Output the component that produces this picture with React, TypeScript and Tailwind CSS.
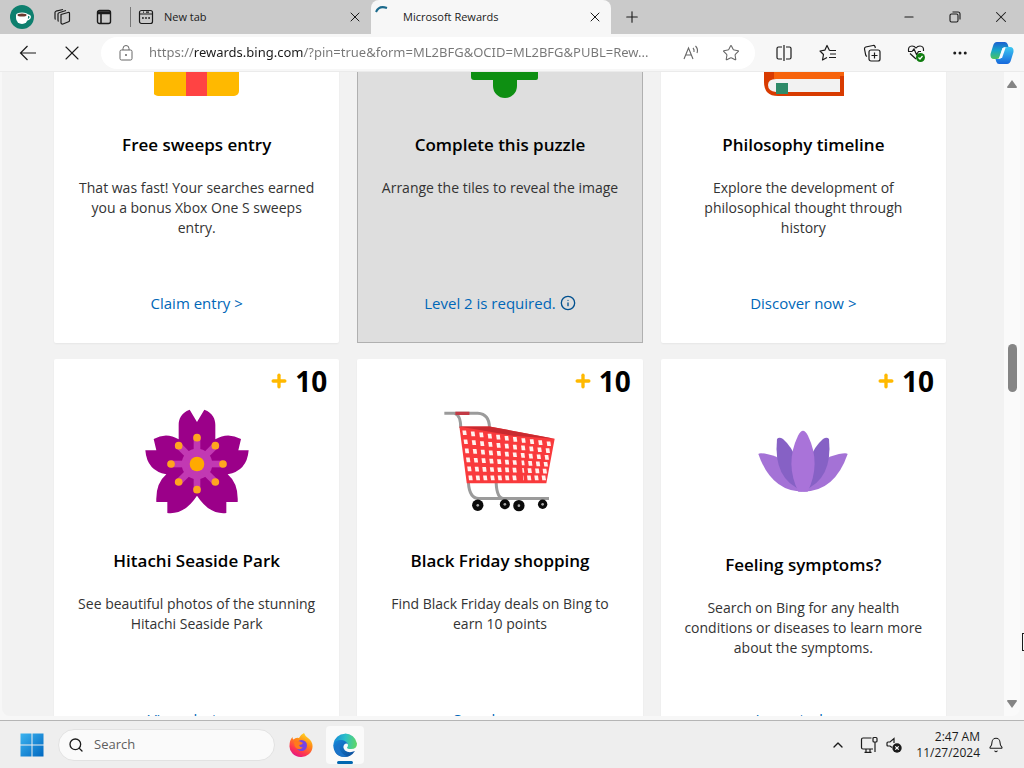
import type { ReactNode } from "react";
import {
  Bell,
  ChevronUp,
  Ellipsis,
  Info,
  Minus,
  Plus,
  Search,
  Star,
  X,
} from "lucide-react";

type CardItem = {
  title: string;
  text: string;
  link: string;
  image: ReactNode;
  points?: number;
  locked?: boolean;
};

function Gift() {
  return (
    <svg viewBox="1 0 86 102" className="h-[102px] w-[86px]">
      <rect x="0" y="22" width="86" height="80" rx="5" fill="#ffb900" />
      <rect x="33" y="22" width="21" height="80" fill="#ff4343" />
      <path d="M43 22C20 22 12 0 28 2c10 1 15 20 15 20s5-19 15-20c16-2 8 20-15 20z" fill="#ff4343" />
    </svg>
  );
}

function Puzzle() {
  return (
    <svg viewBox="0 0 100 106" className="h-[106px] w-[100px]">
      <path
        d="M21 20h22a12 12 0 1 1 24 0h19q2 0 2 2v64q0 2-2 2H67v6a12 12 0 0 1-24 0v-6H24q-3 0-3-3z"
        fill="#0e8f12"
      />
    </svg>
  );
}

function Book() {
  return (
    <svg viewBox="-1 0 80 102" className="h-[102px] w-20 overflow-visible">
      <path d="M0 12Q0 0 12 0h68v102H14Q0 102 0 88z" fill="#d83b01" />
      <path d="M10 0h70v85H10z" fill="#f7630c" />
      <path d="M76 82h4v20h-4z" fill="#d83b01" />
      <path d="M76 85v13H12q-8-1-8-7 0-6 8-6z" fill="#f2f2f2" />
      <path d="M12 89h12v11H12z" fill="#2f8a68" />
    </svg>
  );
}

const stamens = [
  [200, 234],
  [255, 258],
  [278, 313],
  [255, 367],
  [200, 390],
  [145, 367],
  [122, 313],
  [145, 258],
];

function Flower() {
  return (
    <svg viewBox="44 146 312 316" className="h-[106px] w-[104px]">
      <path
        d="M178 150L200 187L222 150C248 160 255 178 255 196V239Q292 216 332 238L324 272H355Q350 334 292 344Q325 372 322 427H288V460Q238 466 200 408Q162 466 111 460V427H78Q75 372 108 344Q50 334 45 272H78L70 238Q108 216 145 239V196C145 178 152 160 178 150Z"
        fill="#9b0089"
      />
      <circle cx="200" cy="313" r="46" fill="#c239b3" />
      {stamens.map(([x, y]) => (
        <g key={`${x}-${y}`}>
          <path d={`M200 313L${x} ${y}`} stroke="#c239b3" strokeWidth="20" />
          <circle cx={x} cy={y} r="11.5" fill="#ffa51f" />
        </g>
      ))}
      <circle cx="200" cy="313" r="22" fill="#ffaa00" />
    </svg>
  );
}

const cartHoles = Array.from({ length: 66 }, (_, i) => {
  const c = (i % 11) / 10;
  const r = Math.floor(i / 11) / 5;
  const left = 105 + 18 * r;
  const right = 357 - 15 * r;
  const top = 219 + 33 * c;
  return { x: left + (right - left) * c, y: top + (354 - top) * r };
});

function Cart() {
  return (
    <svg viewBox="44 154 332 302" className="h-[101px] w-[111px]">
      <g fill="none" stroke="#9b9b9b" strokeWidth="9">
        <path d="M45 161H145Q180 163 180 205" />
        <path d="M75 161Q94 165 94 205" />
        <path d="M117 368Q120 415 148 416H358" />
        <path d="M200 368Q202 415 222 416" />
      </g>
      <path d="M78 161h42" stroke="#c23a45" strokeWidth="10" />
      <path d="M90 200H180L375 237L350 370H112Z" fill="#f93a3c" />
      <path d="M90 200H180L375 237L250 228Z" fill="#c92a30" />
      {cartHoles.map((h, i) => (
        <path key={i} d={`M${h.x - 6} ${h.y - 7}h11l2 14h-11z`} fill="#fff2ee" />
      ))}
      <path d="M262 285L266 368H282L274 285Z" fill="#f93a3c" />
      {[
        [145, 436, 17],
        [226, 433, 15],
        [268, 437, 17],
        [339, 433, 14],
      ].map(([x, y, r]) => (
        <g key={x}>
          <circle cx={x} cy={y} r={r} fill="#0b0b0b" />
          <circle cx={x} cy={y} r="4" fill="#aaa" />
        </g>
      ))}
    </svg>
  );
}

function Lotus() {
  return (
    <svg viewBox="55 141 270 336" className="h-28 w-[90px]">
      <path d="M56 282Q62 275 110 290Q160 330 190 395Q95 395 56 282Z" fill="#a472d6" />
      <path d="M324 282Q318 275 270 290Q220 330 190 395Q285 395 324 282Z" fill="#a472d6" />
      <path d="M112 237Q118 230 130 237Q180 280 190 392Q100 360 112 237Z" fill="#8661c5" />
      <path d="M268 237Q262 230 250 237Q200 280 190 392Q280 360 268 237Z" fill="#8661c5" />
      <path d="M190 212Q197 212 205 227Q245 310 204 395H176Q135 310 175 227Q183 212 190 212Z" fill="#a973d9" />
    </svg>
  );
}

const cards: CardItem[] = [
  {
    title: "Free sweeps entry",
    text: "That was fast! Your searches earned you a bonus Xbox One S sweeps entry.",
    link: "Claim entry >",
    image: <Gift />,
  },
  {
    title: "Complete this puzzle",
    text: "Arrange the tiles to reveal the image",
    link: "Level 2 is required.",
    image: <Puzzle />,
    locked: true,
  },
  {
    title: "Philosophy timeline",
    text: "Explore the development of philosophical thought through history",
    link: "Discover now >",
    image: <Book />,
  },
  {
    title: "Hitachi Seaside Park",
    text: "See beautiful photos of the stunning Hitachi Seaside Park",
    link: "View photos >",
    image: <Flower />,
    points: 10,
  },
  {
    title: "Black Friday shopping",
    text: "Find Black Friday deals on Bing to earn 10 points",
    link: "Search now >",
    image: <Cart />,
    points: 10,
  },
  {
    title: "Feeling symptoms?",
    text: "Search on Bing for any health conditions or diseases to learn more about the symptoms.",
    link: "Learn today >",
    image: <Lotus />,
    points: 10,
  },
];

function Card({ item }: { item: CardItem }) {
  return (
    <article
      className={`flex h-[400px] flex-col items-center px-5 text-center ${
        item.locked ? "bg-[#dedede] inset-ring inset-ring-[#b0b0b0]" : "rounded-xs bg-white shadow-xs"
      }`}
    >
      <div className="-mr-2 flex h-12 shrink-0 items-start gap-1.5 self-end pt-0.5 text-[28px] leading-10 font-bold text-black">
        {item.points && (
          <>
            <Plus className="mt-2.5 size-5 text-[#ffb900]" strokeWidth={4} />
            {item.points}
          </>
        )}
      </div>
      <div className="flex min-h-[108px] shrink-0 items-center">{item.image}</div>
      <h3 className="mt-8 text-[17px] leading-7 font-semibold text-black">{item.title}</h3>
      <p className="mt-[19px] text-sm leading-5 text-[#333]">{item.text}</p>
      <a
        href="#"
        className="mt-auto mb-7 flex items-center gap-1 text-[15px] leading-6 font-medium text-[#0067b8]"
      >
        {item.link}
        {item.locked && <Info className="size-4 text-[#00508f]" />}
      </a>
    </article>
  );
}

function TabBar() {
  return (
    <header className="flex h-[34px] shrink-0 items-center bg-[#cacaca] text-[11px] text-[#1b1b1b]">
      <button aria-label="Profile" className="flex w-11 justify-center">
        <svg viewBox="0 0 24 24" className="size-6">
          <circle cx="12" cy="12" r="12" fill="#0e7f6e" />
          <path d="M6 10h12v3a6 6 0 0 1-12 0z" fill="#fff" />
          <path d="M17 10q4 0 3 3-1 2-4 2" fill="none" stroke="#fff" strokeWidth="1.5" />
          <ellipse cx="12" cy="10" rx="6" ry="2.5" fill="#fff" />
          <ellipse cx="12" cy="10" rx="4.5" ry="1.5" fill="#6b3a2e" />
        </svg>
      </button>
      <button aria-label="Workspaces" className="flex w-9 justify-center">
        <svg viewBox="0 0 18 18" className="size-[18px]" fill="none" stroke="currentColor" strokeWidth="1.2" strokeLinejoin="round">
          <path d="M8 6.5l7-2q1.500-.3 1.500 1v7q0 1-1 1.300L10 16q-1.500.4-2-1z" />
          <path d="M5.500 13.500Q5 13 5 12V6q0-1 1-1.300L13 2.500" />
          <path d="M2.500 11.500Q2 11 2 10V4.500q0-1 1-1.300L10 1.500" />
        </svg>
      </button>
      <button aria-label="Tab actions" className="flex w-12 justify-center">
        <svg viewBox="0 0 16 16" className="size-4" fill="none" stroke="currentColor" strokeWidth="1.4">
          <rect x="1.500" y="1.500" width="13" height="13" rx="2" />
          <path d="M1.500 3h13M1.500 4.500h13M5 4v10" strokeWidth="1.6" />
        </svg>
      </button>
      <div className="ml-0.5 h-5 w-px bg-[#777]" />
      <div className="flex min-w-0 flex-1 items-center">
        <div className="flex w-60 items-center pr-2 pl-[7px]">
          <svg viewBox="0 0 16 16" className="size-4" fill="none" stroke="currentColor" strokeWidth="1.2">
            <rect x="1.500" y="1.500" width="13" height="13" rx="2" />
            <path d="M2 5h12M5 3.200h1M8 3.200h3" />
            <path d="M4 9h1.800M7.100 9h1.800M10.200 9H12" strokeWidth="1.6" />
          </svg>
          <button className="ml-2.5 flex-1 text-left">New tab</button>
          <button aria-label="Close New tab">
            <X className="size-4" strokeWidth={1.5} />
          </button>
        </div>
        <div className="flex h-[34px] w-60 items-center rounded-t-lg bg-[#f7f7f7] pr-2 pl-1">
          <svg viewBox="0 0 16 16" className="mt-1 size-4 self-start" fill="none">
            <path d="M1 8Q4 1 12 4" stroke="#1b6a8c" strokeWidth="2" />
          </svg>
          <button className="ml-3 flex-1 text-left">Microsoft Rewards</button>
          <button aria-label="Close Microsoft Rewards">
            <X className="size-4" strokeWidth={1.5} />
          </button>
        </div>
        <button aria-label="New tab" className="ml-3">
          <Plus className="size-[18px]" strokeWidth={1.5} />
        </button>
      </div>
      <button aria-label="Minimize" className="flex w-[46px] justify-center">
        <Minus className="size-3.5" strokeWidth={1.8} />
      </button>
      <button aria-label="Restore" className="flex w-[46px] justify-center">
        <svg viewBox="0 0 12 12" className="size-3" fill="none" stroke="currentColor" strokeWidth="1.1">
          <rect x="1" y="3" width="8" height="8" rx="1.500" />
          <path d="M3.500 1H9q2 0 2 2v5.500" />
        </svg>
      </button>
      <button aria-label="Close" className="flex w-[46px] justify-center">
        <X className="size-[18px]" strokeWidth={1.4} />
      </button>
    </header>
  );
}

function ToolBar() {
  return (
    <div className="flex h-[38px] shrink-0 items-center border-b border-[#ebebeb] bg-[#f7f7f7] pr-0.5 pl-1.5 text-[#1b1b1b]">
      <button aria-label="Back" className="flex w-11 justify-center">
        <svg viewBox="0 0 18 18" className="size-[18px]" fill="none" stroke="currentColor" strokeWidth="1.2">
          <path d="M17 9H1.500M8.500 2L1.500 9l7 7" />
        </svg>
      </button>
      <button aria-label="Stop" className="flex w-11 justify-center">
        <X className="size-6" strokeWidth={1.1} />
      </button>
      <div className="mx-[7px] flex h-8 min-w-0 flex-1 items-center rounded-full bg-white pr-3.5 pl-[18px] text-[#666]">
        <svg viewBox="0 0 14 16" className="h-4 w-3.5" fill="none" stroke="currentColor">
          <rect x="1" y="5" width="12" height="10" rx="1.500" />
          <path d="M4 5V3.500a3 3 0 0 1 6 0V5" />
          <circle cx="7" cy="10" r=".6" fill="currentColor" />
        </svg>
        <input
          aria-label="Address"
          readOnly
          value="https://rewards.bing.com/?pin=true&form=ML2BFG&OCID=ML2BFG&PUBL=Rew..."
          className="ml-4 min-w-0 flex-1 bg-[linear-gradient(90deg,#767676_45px,#1b1b1b_45px,#1b1b1b_154px,#767676_154px)] bg-clip-text font-['Noto_Sans','Open_Sans',sans-serif] text-[13px] text-transparent outline-none"
        />
        <button aria-label="Read aloud" className="flex w-[60px] justify-center">
          <svg viewBox="0 0 18 18" className="size-[18px]" fill="none" stroke="currentColor" strokeWidth="1.100">
            <path d="M2 15L6.500 4L11 15M3.500 11h6M11 4q1.500 1.500 1 4M13.500 2q3 3 1.500 7" />
          </svg>
        </button>
        <button aria-label="Add to favorites" className="flex w-5 justify-center">
          <Star className="size-[18px]" strokeWidth={1.4} />
        </button>
      </div>
      <button aria-label="Split screen" className="flex w-11 justify-center">
        <svg viewBox="0 0 18 18" className="size-[18px]" fill="none" stroke="currentColor" strokeWidth="1.2">
          <path d="M7 3H3.500Q2 3 2 4.500v9Q2 15 3.500 15H7M11 3h3.500Q16 3 16 4.500v9q0 1.500-1.500 1.500H11M9 1v16" />
        </svg>
      </button>
      <button aria-label="Favorites" className="flex w-11 justify-center">
        <svg viewBox="0 0 18 18" className="size-[18px]" fill="none" stroke="currentColor" strokeWidth="1.2" strokeLinejoin="round">
          <path d="M10.500 6.500L8 1.500L5.800 6.200L1 7l3.500 3.500L3.500 16l4.500-2.500M10.500 6.500H17M11 10h6M10 13.500h7" />
        </svg>
      </button>
      <button aria-label="Collections" className="flex w-11 justify-center">
        <svg viewBox="0 0 18 18" className="size-[18px]" fill="none" stroke="currentColor" strokeWidth="1.2">
          <rect x="6" y="6" width="11" height="11" rx="2" />
          <path d="M11.500 8.500v6M8.500 11.500h6M4 12.500Q3 12 2.700 11L1.500 5Q1.300 3.500 2.700 3L10 1.500q1.500-.3 2 1l.4 1.500" />
        </svg>
      </button>
      <button aria-label="Browser essentials" className="flex w-11 justify-center">
        <svg viewBox="0 0 18 18" className="size-[18px]" fill="none" stroke="currentColor" strokeWidth="1.2">
          <path d="M9 15L3 9.500M1.500 7Q1 2 5 2q2.500 0 4 2 1.500-2 4-2 4 0 3.500 5M1 7.500h4L7 5l2.500 5.500L11.500 7.500H14" />
          <circle cx="13.500" cy="13.500" r="4.500" fill="#107c10" stroke="none" />
          <path d="M11.500 13.500l1.500 1.500 2.500-3" stroke="#fff" />
        </svg>
      </button>
      <button aria-label="Settings and more" className="flex w-11 justify-center">
        <Ellipsis className="size-[18px]" />
      </button>
      <button aria-label="Copilot" className="flex w-10 justify-center">
        <svg viewBox="0 0 24 24" className="size-6">
          <defs>
            <linearGradient id="cpa" x1="0" y1="0" x2="0" y2="1">
              <stop offset="0" stopColor="#1b5fd0" />
              <stop offset=".5" stopColor="#17a7c9" />
              <stop offset="1" stopColor="#4cc35e" />
            </linearGradient>
            <linearGradient id="cpb" x1="0" y1="0" x2="0" y2="1">
              <stop offset="0" stopColor="#3cc9f2" />
              <stop offset="1" stopColor="#1668dc" />
            </linearGradient>
          </defs>
          <path d="M7 1h8q2 0 2.800 2.500L18.500 6H15q-2 0-2.700 2l-2.500 8Q9 18 7 18H4q-4 0-3.500-5L3 5Q4 1 7 1z" fill="url(#cpa)" />
          <path d="M17 23H9q-2 0-2.800-2.500L5.500 18H9q2 0 2.700-2l2.500-8Q15 6 17 6h3q4 0 3.500 5L21 19q-1 4-4 4z" fill="url(#cpb)" />
          <path d="M12.500 7h3l-3.500 10H9z" fill="#f4fbff" />
        </svg>
      </button>
    </div>
  );
}

function TaskBar() {
  return (
    <footer className="flex h-12 shrink-0 items-center border-t border-[#b5b5b5] bg-[#eeeeee] px-5 text-[#1b1b1b]">
      <button aria-label="Start">
        <svg viewBox="0 0 24 24" className="size-6">
          <defs>
            <linearGradient id="win" x1="0" y1="0" x2="1" y2="1">
              <stop offset="0" stopColor="#3cb4f0" />
              <stop offset="1" stopColor="#0067c0" />
            </linearGradient>
          </defs>
          <path d="M.5.500h11v11H.5zM12.500.500h11v11h-11zM.5 12.500h11v11H.5zM12.500 12.500h11v11h-11z" fill="url(#win)" />
        </svg>
      </button>
      <label className="ml-3.5 flex h-8 w-[217px] items-center gap-2.5 rounded-full border border-[#e2e2e2] bg-[#fafafa] pl-[9px]">
        <Search className="size-4" />
        <input
          type="search"
          placeholder="Search"
          className="min-w-0 flex-1 text-[13px] outline-none placeholder:text-[#5e5e5e]"
        />
      </label>
      <button aria-label="Firefox" className="ml-3.5">
        <svg viewBox="0 0 24 24" className="size-6">
          <defs>
            <linearGradient id="ffx" x1=".8" y1="0" x2=".3" y2="1">
              <stop offset="0" stopColor="#ffe226" />
              <stop offset=".4" stopColor="#ff8a16" />
              <stop offset=".75" stopColor="#ff3750" />
              <stop offset="1" stopColor="#e31587" />
            </linearGradient>
          </defs>
          <path d="M15 0q1 3 4 5 5 4 4.500 9A11.500 10.500 0 0 1 .5 13Q.5 7 3.500 4q0 2 1 2.500Q7 4 10 5q1-3 5-5z" fill="url(#ffx)" />
          <circle cx="12.500" cy="12.500" r="5.500" fill="#7542e5" />
          <path d="M5 9q4-2 7 0l2 1q-1 2-4 2 1 3 4 2-3 4-7 1-2-2-2-6z" fill="#ff7a1c" />
        </svg>
      </button>
      <button
        aria-label="Microsoft Edge"
        className="ml-[13px] flex h-[38px] w-[38px] flex-col items-center justify-end rounded-sm bg-[#fafafa]"
      >
        <svg viewBox="0 0 24 24" className="size-6">
          <defs>
            <linearGradient id="edg" x1="0" y1=".3" x2="1" y2=".4">
              <stop offset="0" stopColor="#1688d9" />
              <stop offset=".5" stopColor="#2bc0c8" />
              <stop offset="1" stopColor="#5fd668" />
            </linearGradient>
            <linearGradient id="edb" x1="0" y1="0" x2="1" y2="1">
              <stop offset="0" stopColor="#1788dc" />
              <stop offset="1" stopColor="#0c4a96" />
            </linearGradient>
          </defs>
          <path d="M.3 11A12 12 0 0 1 24 10.500Q24 16 18 16q-4 0-4-1.500 1-1 1-2.500Q14 8 9 8 3 8 .3 11z" fill="url(#edg)" />
          <path d="M.2 12Q2 6.500 9 7q4 .5 6 4-2-1-3.500.2Q9 14 12 17.500q4 3 10 .5Q18 24 12 24 1 24 .2 12z" fill="url(#edb)" />
          <path d="M9 9Q4 15 9 20q1.500 1.800 5 3.500Q6 25 2.500 19 0 13 9 9z" fill="#1b74c9" />
        </svg>
        <span className="mt-1 h-[3px] w-4 rounded-full bg-[#0067b0]" />
      </button>
      <div className="ml-auto flex items-center">
        <button aria-label="Show hidden icons">
          <ChevronUp className="size-4" />
        </button>
        <button aria-label="Network" className="ml-3.5">
          <svg viewBox="0 0 18 18" className="size-[18px]" fill="none" stroke="currentColor" strokeWidth="1.2">
            <path d="M11.500 2H3Q1.500 2 1.500 3.500v8Q1.500 13 3 13h10M6 13v3M10 13v3M4.500 16.300h7" />
            <rect x="13" y="1.500" width="4" height="4.500" rx="1" />
            <path d="M15 6v10" />
          </svg>
        </button>
        <button aria-label="Volume muted" className="ml-2">
          <svg viewBox="0 0 16 16" className="size-4" fill="none" stroke="currentColor" strokeWidth="1.2">
            <path d="M6 10.500L4 9H2Q1 9 1 8V6q0-1 1-1h2l4-3.500V6" />
            <circle cx="11" cy="11" r="4.700" fill="currentColor" stroke="none" />
            <path d="M9.300 9.300l3.400 3.400M12.700 9.300l-3.400 3.400" stroke="#fff" />
          </svg>
        </button>
        <time className="ml-3.5 text-right text-xs leading-4">
          2:47 AM
          <br />
          11/27/2024
        </time>
        <button aria-label="Notifications" className="ml-2">
          <Bell className="size-4" strokeWidth={1.6} />
        </button>
      </div>
    </footer>
  );
}

export default function App() {
  return (
    <div className="relative flex h-screen flex-col overflow-hidden bg-[#f7f7f7] font-['Open_Sans','Noto_Sans',sans-serif]">
      <TabBar />
      <ToolBar />
      <div className="mr-1 mb-1 ml-0.5 flex min-h-0 flex-1 overflow-hidden rounded-b-lg">
        <main className="min-w-0 flex-1 overflow-hidden bg-[#f2f2f2] pr-[58px] pl-[52px]">
          {/* scrolled part way down the page */}
          <div className="-mt-[129px] grid grid-cols-3 gap-x-[18px] gap-y-4">
            {cards.map((item) => (
              <Card key={item.title} item={item} />
            ))}
          </div>
        </main>
        <div className="flex w-4 flex-col items-center bg-[#fafafa] py-2">
          <svg viewBox="0 0 10 8" className="h-2 w-2.5">
            <path d="M5 0l5 7q0 1-1 1H1Q0 8 0 7z" fill="#858585" />
          </svg>
          <div className="grow-[253]" />
          <div className="h-12 w-[9px] rounded-full bg-[#858585]" />
          <div className="grow-[304]" />
          <svg viewBox="0 0 10 8" className="h-2 w-2.5">
            <path d="M5 8L0 1q0-1 1-1h8q1 0 1 1z" fill="#858585" />
          </svg>
        </div>
      </div>
      <TaskBar />
      <div className="absolute top-[633px] right-0 h-[18px] w-0.5 border-y border-l border-[#1b1b1b]" />
    </div>
  );
}
